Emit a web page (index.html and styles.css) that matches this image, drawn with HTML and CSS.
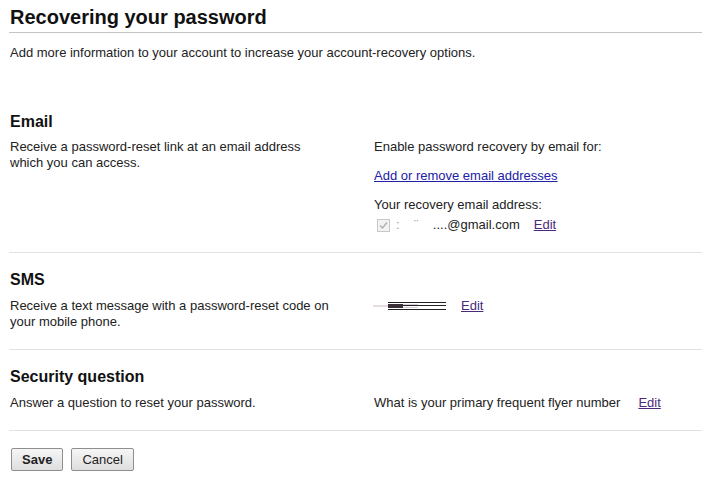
FILE: index.html
```html
<!DOCTYPE html>
<html>
<head>
<meta charset="utf-8">
<link rel="stylesheet" href="styles.css">
</head>
<body>
<div class="page">
  <h1 class="title">Recovering your password</h1>
  <p class="intro">Add more information to your account to increase your account-recovery options.</p>

  <section class="sec sec-first">
    <h2 class="sec-head">Email</h2>
    <div class="sec-grid">
      <div class="sec-desc">Receive a password-reset link at an email address<br>which you can access.</div>
      <div class="sec-side">
        <div>Enable password recovery by email for:</div>
        <div class="gap"><a class="link" href="#">Add or remove email addresses</a></div>
        <div class="gap">Your recovery email address:</div>
        <div class="check-row">
          <span class="cbox"><svg width="9" height="9" viewBox="0 0 9 9"><path d="M1 4.5 L3.5 7 L8 1.5" fill="none" stroke="#b0b0b0" stroke-width="1.4"/></svg></span>
          <span class="mail"><span class="redact">:&nbsp;&nbsp;&nbsp;&nbsp;¨&nbsp;&nbsp;&nbsp;&nbsp;</span>....@gmail.com</span>
          <a class="edit" href="#">Edit</a>
        </div>
      </div>
    </div>
  </section>

  <section class="sec">
    <h2 class="sec-head">SMS</h2>
    <div class="sec-grid">
      <div class="sec-desc">Receive a text message with a password-reset code on<br>your mobile phone.</div>
      <div class="sec-side">
        <div class="phone-row">
          <svg class="phone" width="74" height="12" viewBox="0 0 74 12">
            <rect x="0" y="5" width="15" height="2" fill="#e6dde3"/>
            <rect x="15" y="4" width="15" height="4" fill="#3a2f38"/>
            <rect x="30" y="4" width="15" height="1" fill="#d8d0d6"/>
            <rect x="30" y="7" width="15" height="1" fill="#d8d0d6"/>
            <rect x="15" y="2" width="58" height="1" fill="#222"/>
            <rect x="30" y="5" width="43" height="1" fill="#222"/>
            <rect x="15" y="9" width="58" height="1" fill="#222"/>
          </svg>
          <a class="edit" href="#">Edit</a>
        </div>
      </div>
    </div>
  </section>

  <section class="sec">
    <h2 class="sec-head">Security question</h2>
    <div class="sec-grid">
      <div class="sec-desc">Answer a question to reset your password.</div>
      <div class="sec-side">
        <div class="q-row">
          <span>What is your primary frequent flyer number</span>
          <a class="edit" href="#">Edit</a>
        </div>
      </div>
    </div>
  </section>

  <div class="actions">
    <button class="btn btn-save">Save</button>
    <button class="btn">Cancel</button>
  </div>
</div>
</body>
</html>
```
FILE: styles.css
```css
html, body {
  margin: 0;
  padding: 0;
  background: #fff;
}
body {
  font-family: "Liberation Sans", Arial, sans-serif;
  font-size: 13px;
  line-height: 16px;
  color: #222;
}
.page {
  padding-left: 9px;
}
.title {
  margin: 0;
  padding: 5px 0 3px 1px;
  font-size: 20px;
  line-height: 24px;
  font-weight: bold;
  color: #111;
  border-bottom: 1px solid #c4c4c4;
}
.intro {
  margin: 12px 0 0 1px;
}
.sec {
  padding: 17px 0 19px 1px;
  border-bottom: 1px solid #e2e2e2;
}
.sec-first {
  padding-top: 51px;
}
.sec-head {
  margin: 0;
  font-size: 16px;
  line-height: 20px;
  font-weight: bold;
  color: #111;
}
.sec-grid {
  display: grid;
  grid-template-columns: 364px 1fr;
  margin-top: 8px;
}
.sec-first .sec-grid {
  margin-top: 7px;
}
.gap {
  margin-top: 13px;
}
.link {
  color: #2020a8;
  text-decoration: underline;
}
.edit {
  color: #4b2a7a;
  text-decoration: underline;
}
.check-row {
  display: flex;
  align-items: center;
  padding-left: 3px;
  margin-top: 4px;
}
.cbox {
  width: 11px;
  height: 11px;
  border: 1px solid #c8c8c8;
  background: #f2f2f2;
  display: flex;
  align-items: center;
  justify-content: center;
  margin-right: 6px;
}
.mail {
  margin-right: 14px;
}
.redact {
  color: #999;
}
.phone-row {
  display: flex;
  align-items: center;
  margin-left: -1px;
}
.phone {
  display: block;
  margin-right: 14px;
}
.q-row {
  display: flex;
}
.q-row span {
  margin-right: 18px;
}
.actions {
  display: flex;
  gap: 8px;
  padding: 17px 0 0 2px;
}
.btn {
  font-family: "Liberation Sans", Arial, sans-serif;
  font-size: 13px;
  height: 23px;
  padding: 0 10px;
  border: 1px solid #8e8e8e;
  border-radius: 2px;
  background: linear-gradient(#f6f6f6, #dedede);
  color: #222;
}
.btn-save {
  font-weight: bold;
  padding: 0 10px;
}
```
